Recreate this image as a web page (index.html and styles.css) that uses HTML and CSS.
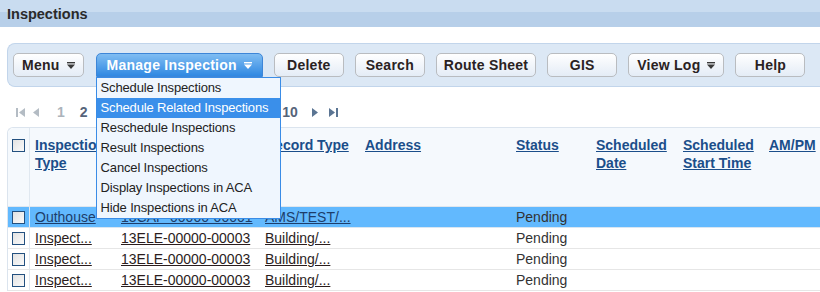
FILE: index.html
```html
<!doctype html>
<html lang="en">
<head>
    <meta charset="utf-8">
    <title>Inspections</title>
    <link rel="stylesheet" href="styles.css">
</head>
<body>

<!-- Заголовок раздела -->
<div class="title-bar">Inspections</div>

<div class="content">
    <!-- Панель кнопок -->
    <div class="toolbar">
        <button class="btn btn-drop">Menu
            <svg class="btn-arrow" viewBox="0 0 8 7"><rect width="8" height="1.4"/><polygon points="0,2.6 8,2.6 4,7"/></svg>
        </button>
        <div class="btn-wrap">
            <button class="btn btn-drop btn-active">Manage Inspection
                <svg class="btn-arrow" viewBox="0 0 8 7"><rect width="8" height="1.4"/><polygon points="0,2.6 8,2.6 4,7"/></svg>
            </button>
            <!-- Выпадающее меню -->
            <ul class="dropdown">
                <li class="dropdown-item">Schedule Inspections</li>
                <li class="dropdown-item is-hover">Schedule Related Inspections</li>
                <li class="dropdown-item">Reschedule Inspections</li>
                <li class="dropdown-item">Result Inspections</li>
                <li class="dropdown-item">Cancel Inspections</li>
                <li class="dropdown-item">Display Inspections in ACA</li>
                <li class="dropdown-item">Hide Inspections in ACA</li>
            </ul>
        </div>
        <button class="btn">Delete</button>
        <button class="btn">Search</button>
        <button class="btn btn-wide">Route Sheet</button>
        <button class="btn">GIS</button>
        <button class="btn btn-drop">View Log
            <svg class="btn-arrow" viewBox="0 0 8 7"><rect width="8" height="1.4"/><polygon points="0,2.6 8,2.6 4,7"/></svg>
        </button>
        <button class="btn">Help</button>
    </div>

    <!-- Постраничная навигация -->
    <div class="pager">
        <svg class="pager-icon pager-first is-disabled" viewBox="0 0 9 11"><rect x="0" y="1" width="2" height="9"/><polygon points="9,1 9,10 3,5.5"/></svg>
        <svg class="pager-icon pager-prev is-disabled" viewBox="0 0 9 11"><polygon points="7,1 7,10 1,5.5"/></svg>
        <span class="pager-num pager-one is-current">1</span>
        <span class="pager-num">2</span>
        <span class="pager-num">3</span>
        <span class="pager-num">4</span>
        <span class="pager-num">5</span>
        <span class="pager-num">6</span>
        <span class="pager-num">7</span>
        <span class="pager-num">8</span>
        <span class="pager-num">9</span>
        <span class="pager-num pager-ten">10</span>
        <svg class="pager-icon pager-next" viewBox="0 0 9 11"><polygon points="1,1 1,10 7,5.5"/></svg>
        <svg class="pager-icon pager-end" viewBox="0 0 9 11"><polygon points="0,1 0,10 6,5.5"/><rect x="7" y="1" width="2" height="9"/></svg>
    </div>

    <!-- Таблица инспекций -->
    <table class="grid">
        <colgroup>
            <col class="col-check">
            <col class="col-type">
            <col class="col-record">
            <col class="col-rtype">
            <col class="col-address">
            <col class="col-status">
            <col class="col-date">
            <col class="col-time">
            <col class="col-ampm">
        </colgroup>
        <thead>
            <tr>
                <th class="cell-check"><span class="check"></span></th>
                <th><a href="#">Inspection Type</a></th>
                <th><a href="#">Record ID</a></th>
                <th><a href="#">Record Type</a></th>
                <th><a href="#">Address</a></th>
                <th><a href="#">Status</a></th>
                <th><a href="#">Scheduled Date</a></th>
                <th><a href="#">Scheduled Start Time</a></th>
                <th><a href="#">AM/PM</a></th>
            </tr>
        </thead>
        <tbody>
            <tr class="is-selected">
                <td class="cell-check"><span class="check"></span></td>
                <td><a href="#">Outhouse</a></td>
                <td><a href="#">13CAP-00000-00001</a></td>
                <td><a href="#">AMS/TEST/...</a></td>
                <td></td>
                <td>Pending</td>
                <td></td>
                <td></td>
                <td></td>
            </tr>
            <tr>
                <td class="cell-check"><span class="check"></span></td>
                <td><a href="#">Inspect...</a></td>
                <td><a href="#">13ELE-00000-00003</a></td>
                <td><a href="#">Building/...</a></td>
                <td></td>
                <td>Pending</td>
                <td></td>
                <td></td>
                <td></td>
            </tr>
            <tr>
                <td class="cell-check"><span class="check"></span></td>
                <td><a href="#">Inspect...</a></td>
                <td><a href="#">13ELE-00000-00003</a></td>
                <td><a href="#">Building/...</a></td>
                <td></td>
                <td>Pending</td>
                <td></td>
                <td></td>
                <td></td>
            </tr>
            <tr>
                <td class="cell-check"><span class="check"></span></td>
                <td><a href="#">Inspect...</a></td>
                <td><a href="#">13ELE-00000-00003</a></td>
                <td><a href="#">Building/...</a></td>
                <td></td>
                <td>Pending</td>
                <td></td>
                <td></td>
                <td></td>
            </tr>
        </tbody>
    </table>
</div>

</body>
</html>
```

FILE: styles.css
```css
/* Сброс */
*, *::before, *::after {
    box-sizing: border-box;
}

:root {
    --text: #2b2b2b;
    --link-head: #1b4e8a;
    --border: #dbe4ee;
    --toolbar-bg: #dce8f5;
}

body {
    margin: 0;
    font-family: "Liberation Sans", Arial, sans-serif;
    font-size: 14px;
    color: var(--text);
    background: #fff;
    overflow: hidden;
}

/* Заголовок */
.title-bar {
    height: 27px;
    line-height: 28px;
    padding-left: 7px;
    font-weight: bold;
    font-size: 14.5px;
    color: #2a2a2a;
    background: linear-gradient(#c9dcf0 0, #c9dcf0 12px, #b7cfe9 12px, #b7cfe9 100%);
}

.content {
    padding-left: 7px;
}

/* Панель кнопок */
.toolbar {
    display: flex;
    align-items: center;
    gap: 11px;
    height: 44px;
    margin-top: 16px;
    margin-right: -20px;
    padding-left: 5px;
    background: var(--toolbar-bg);
    border: 1px solid #c2d5eb;
    border-right: none;
    border-radius: 8px 0 0 8px;
}

.btn {
    display: inline-flex;
    align-items: center;
    justify-content: center;
    gap: 7px;
    height: 24px;
    min-width: 70px;
    padding: 0 8px;
    font-family: inherit;
    font-size: 14px;
    font-weight: bold;
    letter-spacing: 0.25px;
    color: #2a2222;
    background: linear-gradient(#ffffff, #e4ecf6);
    border: 1px solid #b9bcc0;
    border-radius: 5px;
    cursor: pointer;
}

.btn-drop {
    padding: 0 8px;
}

.btn-wide {
    padding: 0 7px;
}

.btn-arrow {
    width: 8px;
    height: 7px;
    fill: #3a3a3a;
}

.btn-wrap {
    position: relative;
    margin-left: 1px;
}

.btn-active {
    padding: 0 10px;
    color: #fff;
    background: linear-gradient(#80bdf2, #2f88e2);
    border-color: #3d86d8;
    border-radius: 5px 5px 0 0;
}

.btn-active .btn-arrow {
    fill: #fff;
}

/* Выпадающее меню */
.dropdown {
    position: absolute;
    top: 100%;
    left: 0;
    z-index: 10;
    width: 185px;
    margin: 0;
    padding: 0;
    list-style: none;
    background: #eff6fe;
    border: 1px solid #3a8ce6;
}

.dropdown-item {
    height: 20px;
    line-height: 20px;
    padding-left: 4px;
    font-size: 13px;
    letter-spacing: -0.15px;
    color: #222;
    white-space: nowrap;
}

.dropdown-item.is-hover {
    color: #fff;
    background: #3a8fea;
}

/* Пагинация */
.pager {
    display: flex;
    align-items: center;
    height: 16px;
    margin: 17px 0 7px 9px;
    font-weight: bold;
    color: #56647a;
}

.pager-icon {
    width: 9px;
    height: 11px;
    fill: #5b7593;
}

.pager-icon.is-disabled {
    fill: #b4bcc4;
}

.pager-num {
    margin-left: 15px;
}

.pager-prev { margin-left: 7px; }
.pager-one { margin-left: 16px; }
.pager-ten { margin-left: 35px; }
.pager-next { margin-left: 13px; }
.pager-end { margin-left: 9px; }

.pager-num.is-current {
    color: #acb3bb;
}

/* Таблица */
.grid {
    width: 840px;
    border-collapse: separate;
    border-spacing: 0;
    table-layout: fixed;
    border-top: 1px solid var(--border);
    border-left: 1px solid var(--border);
    border-radius: 6px 0 0 0;
}

.col-check { width: 22px; }
.col-type { width: 86px; }
.col-record { width: 144px; }
.col-rtype { width: 100px; }
.col-address { width: 151px; }
.col-status { width: 80px; }
.col-date { width: 87px; }
.col-time { width: 86px; }
.col-ampm { width: 84px; }

.grid th {
    height: 79px;
    padding: 8px 5px 0;
    vertical-align: top;
    text-align: left;
    line-height: 18px;
    background: #f5f9fd;
    border-bottom: 1px solid #e0e7ee;
    border-radius: 6px 0 0 0;
}

.grid th + th {
    border-radius: 0;
}

.grid th a {
    color: var(--link-head);
    font-weight: bold;
}

.grid td {
    height: 21px;
    padding: 0 5px;
    white-space: nowrap;
    overflow: hidden;
    border-bottom: 1px solid #e6e6e6;
    color: #333;
}

.grid td a {
    color: #2b1d1d;
}

.grid .cell-check {
    padding: 0 0 0 4px;
    border-right: 1px solid #e0e8f0;
}

.grid th.cell-check {
    padding-top: 11px;
}

.grid tr.is-selected td {
    background: #62b9fe;
    border-bottom-color: #d8e6f2;
}

.grid tr.is-selected td a {
    color: #1d3d6a;
}

/* Чекбокс */
.check {
    display: block;
    width: 13px;
    height: 13px;
    border: 1px solid #23507f;
    background: linear-gradient(135deg, #e2e2e2, #fafafa);
}
```
